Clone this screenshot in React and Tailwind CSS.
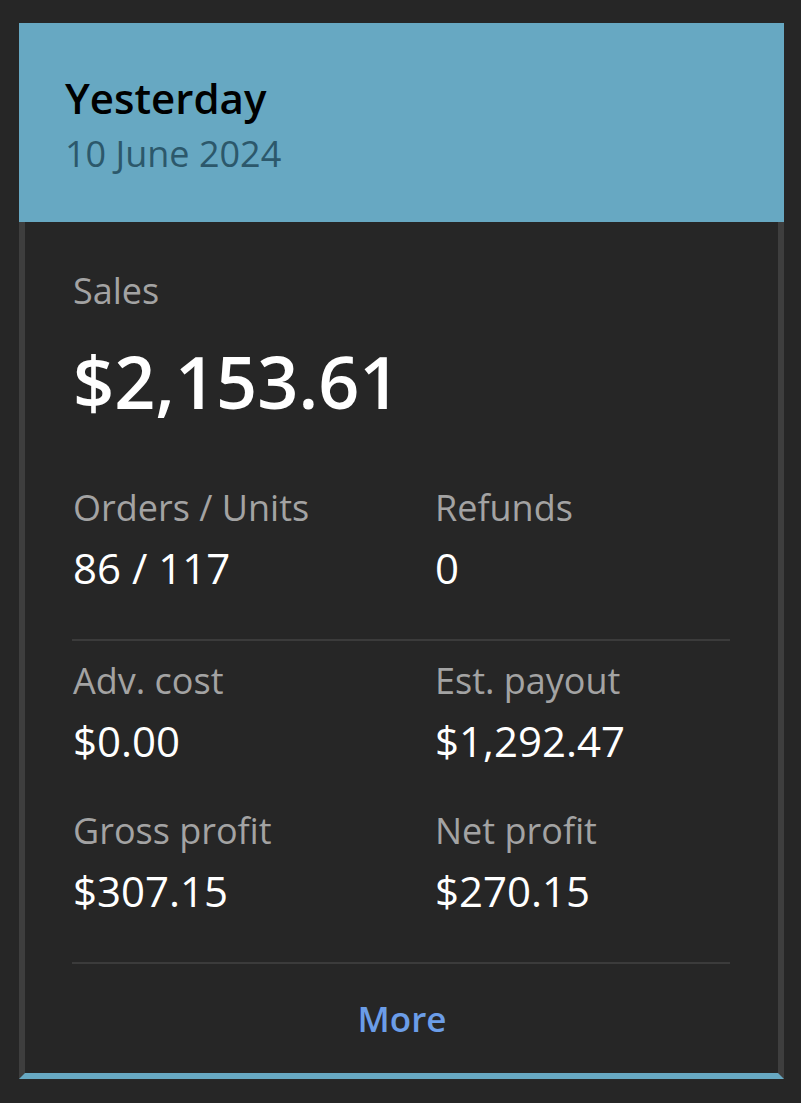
import React from "react";

const font = { fontFamily: '"Open Sans", "Noto Sans", sans-serif' };

function Stat({ label, value }) {
  return (
    <div>
      <div className="text-[36px] leading-[40px] text-[#a3a3a3]">{label}</div>
      <div className="mt-[16px] text-[42px] leading-[48px] text-white">{value}</div>
    </div>
  );
}

export default function App() {
  return (
    <div className="min-h-[1103px] w-full bg-[#262626] pt-[23px] pl-[19px]" style={font}>
      <div className="w-[765px]">
        <div className="bg-[#67a8c2] pl-[46px] pt-[50px] pb-[48px]">
          <div className="text-[42px] leading-[50px] font-semibold text-black">Yesterday</div>
          <div className="mt-[11px] text-[36px] leading-[40px] text-[#2c586b]">10 June 2024</div>
        </div>
        <div className="border-x-[6px] border-b-[6px] border-x-[#3e3e3e] border-b-[#67a8c2] bg-[#262626] pl-[48px] pr-[47px] pt-[49px] pb-[34px]">
          <div className="text-[36px] leading-[40px] text-[#a3a3a3]">Sales</div>
          <div className="mt-[30px] text-[72px] leading-[80px] font-semibold text-white">$2,153.61</div>
          <div className="mt-[67px] grid grid-cols-[362px_1fr]">
            <Stat label="Orders / Units" value="86 / 117" />
            <Stat label="Refunds" value="0" />
          </div>
          <div className="mt-[47px] h-[2px] bg-[#3b3b3b] -ml-px mr-px" />
          <div className="mt-[20px] grid grid-cols-[362px_1fr]">
            <Stat label="Adv. cost" value="$0.00" />
            <Stat label="Est. payout" value="$1,292.47" />
          </div>
          <div className="mt-[46px] grid grid-cols-[362px_1fr]">
            <Stat label="Gross profit" value="$307.15" />
            <Stat label="Net profit" value="$270.15" />
          </div>
          <div className="mt-[47px] h-[2px] bg-[#3b3b3b] -ml-px mr-px" />
          <div className="mt-[35px] text-center text-[35px] leading-[40px] font-semibold text-[#6b9de8]">More</div>
        </div>
      </div>
    </div>
  );
}
